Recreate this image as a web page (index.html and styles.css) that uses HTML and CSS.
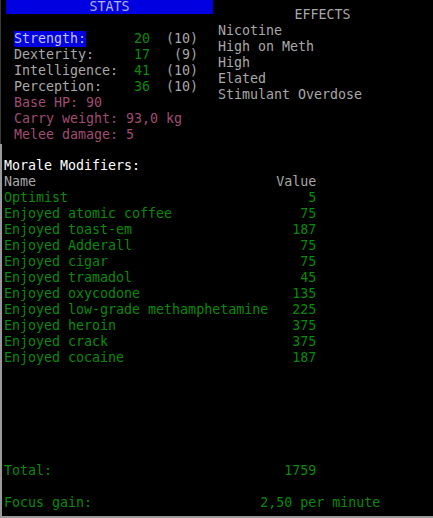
FILE: index.html
```html
<!DOCTYPE html>
<html>
<head>
<meta charset="utf-8">
<link rel="stylesheet" href="styles.css">
</head>
<body>
<div class="screen">
  <div class="top">
    <section class="stats">
      <div class="stats-title">STATS</div>
      <div class="stats-rows">
        <div class="stat"><span class="label sel">Strength:</span><span class="val">20</span><span class="base">(10)</span></div>
        <div class="stat"><span class="label">Dexterity:</span><span class="val">17</span><span class="base">(9)</span></div>
        <div class="stat"><span class="label">Intelligence:</span><span class="val">41</span><span class="base">(10)</span></div>
        <div class="stat"><span class="label">Perception:</span><span class="val">36</span><span class="base">(10)</span></div>
        <div class="derived">Base HP: 90</div>
        <div class="derived">Carry weight: 93,0 kg</div>
        <div class="derived">Melee damage: 5</div>
      </div>
    </section>
    <section class="effects">
      <div class="effects-title">EFFECTS</div>
      <div class="effect">Nicotine</div>
      <div class="effect">High on Meth</div>
      <div class="effect">High</div>
      <div class="effect">Elated</div>
      <div class="effect">Stimulant Overdose</div>
    </section>
  </div>

  <section class="morale">
    <div class="morale-title">Morale Modifiers:</div>
    <div class="mrow head"><span>Name</span><span>Value</span></div>
    <div class="mrow"><span>Optimist</span><span>5</span></div>
    <div class="mrow"><span>Enjoyed atomic coffee</span><span>75</span></div>
    <div class="mrow"><span>Enjoyed toast-em</span><span>187</span></div>
    <div class="mrow"><span>Enjoyed Adderall</span><span>75</span></div>
    <div class="mrow"><span>Enjoyed cigar</span><span>75</span></div>
    <div class="mrow"><span>Enjoyed tramadol</span><span>45</span></div>
    <div class="mrow"><span>Enjoyed oxycodone</span><span>135</span></div>
    <div class="mrow"><span>Enjoyed low-grade methamphetamine</span><span>225</span></div>
    <div class="mrow"><span>Enjoyed heroin</span><span>375</span></div>
    <div class="mrow"><span>Enjoyed crack</span><span>375</span></div>
    <div class="mrow"><span>Enjoyed cocaine</span><span>187</span></div>

    <div class="spacer"></div>

    <div class="mrow total"><span>Total:</span><span>1759</span></div>
    <div class="focus"><span>Focus gain:</span><span>2,50 per minute</span></div>
  </section>
</div>
</body>
</html>
```

FILE: styles.css
```css
html, body {
  margin: 0;
  padding: 0;
  background: #000;
  height: 518px;
  overflow: hidden;
}

.screen {
  width: 433px;
  height: 518px;
  display: flex;
  flex-direction: column;
  font-family: "DejaVu Sans Mono", "Liberation Mono", monospace;
  font-size: 13.3px;
  line-height: 16px;
  color: #a8a8a8;
}

/* upper half: stats panel and effects list side by side */
.top {
  display: flex;
  height: 144px;
  border-left: 1px solid #3a3a3a;
  box-sizing: border-box;
}

.stats {
  width: 212px;
}

.stats-title {
  margin-left: 5px;
  height: 14px;
  line-height: 14px;
  background: #0000e0;
  color: #b4b4dc;
  text-align: center;
}

.stats-rows {
  padding: 17px 0 0 13px;
}

.stat {
  display: flex;
  white-space: pre;
}

.stat .label {
  width: 15ch;
}

.stat .label.sel {
  flex: none;
  width: 9ch;
  margin-right: 6ch;
  background: #0000e0;
  color: #c4c4ff;
}

.stat .val {
  width: 2ch;
  text-align: right;
  color: #0a8a0a;
}

.stat .base {
  width: 6ch;
  text-align: right;
}

.derived {
  color: #a04c72;
}

.effects {
  flex: 1;
  padding: 7px 0 0 5px;
}

.effects-title {
  text-align: center;
  padding-right: 6px;
}

/* lower half: morale table */
.morale {
  flex: 1;
  display: flex;
  flex-direction: column;
  border-left: 2px solid #9a9a9a;
  border-bottom: 2px solid #9a9a9a;
  padding: 14px 0 0 2px;
  color: #0a8a0a;
}

.morale-title {
  color: #fff;
}

.mrow {
  display: flex;
  justify-content: space-between;
  width: 39ch;
  white-space: pre;
}

.mrow.head {
  color: #a8a8a8;
}

.spacer {
  height: 97px;
}

.focus {
  display: grid;
  grid-template-columns: 32ch auto;
  margin-top: 16px;
  white-space: pre;
}
```
